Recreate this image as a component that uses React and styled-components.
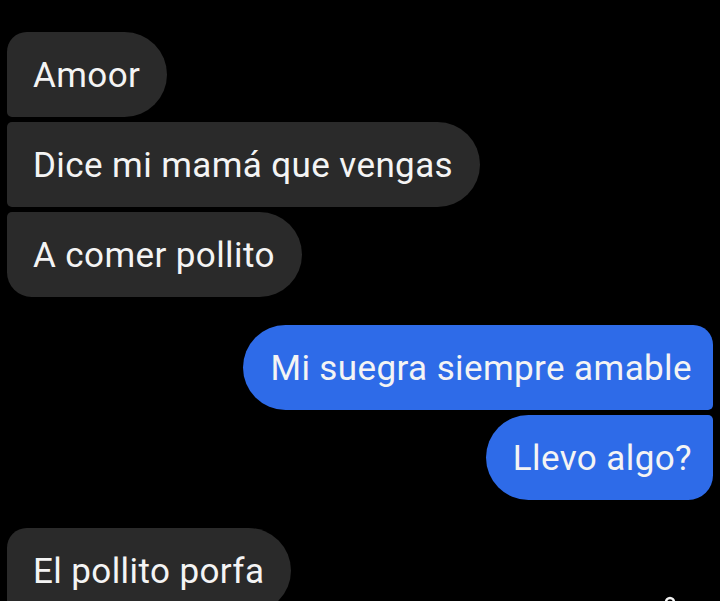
import React from 'react';
import styled, { createGlobalStyle } from 'styled-components';

const GlobalStyle = createGlobalStyle`
  html, body {
    margin: 0;
    padding: 0;
    background: #000;
    overflow: hidden;
  }
  body {
    font-family: Roboto, "Noto Sans", Arial, sans-serif;
  }
`;

const Page = styled.div`
  width: 720px;
  height: 601px;
  box-sizing: border-box;
  padding: 32px 7px 0;
  display: flex;
  flex-direction: column;
  gap: 28px;
  background: #000;
  overflow: hidden;
`;

const Group = styled.div`
  display: flex;
  flex-direction: column;
  gap: 5px;
  align-items: ${(p) => (p.$mine ? 'flex-end' : 'flex-start')};
`;

const LastRow = styled.div`
  display: flex;
  justify-content: space-between;
  align-items: flex-end;
`;

const radii = {
  first: ['20px', '5px'],
  middle: ['5px', '5px'],
  last: ['5px', '25px'],
};

const Bubble = styled.div`
  height: 85px;
  box-sizing: border-box;
  display: flex;
  align-items: center;
  padding: ${(p) => (p.$mine ? '2px 21px 0 27px' : '2px 27px 0 26px')};
  font-size: 35px;
  letter-spacing: 0.4px;
  color: #f4f4f4;
  white-space: nowrap;
  background: ${(p) => (p.$mine ? '#2e6be8' : '#2a2a2a')};
  border-radius: ${(p) => {
    const [top, bottom] = radii[p.$pos];
    return p.$mine
      ? `43px ${top} ${bottom} 43px`
      : `${top} 43px 43px ${bottom}`;
  }};
`;

const Seen = styled.svg`
  width: 14px;
  height: 22px;
  margin-right: 36px;
  margin-bottom: -3px;
  flex-shrink: 0;
`;

const theirs = ['Amoor', 'Dice mi mamá que vengas', 'A comer pollito'];
const mine = ['Mi suegra siempre amable', 'Llevo algo?'];

const pos = (i, n) => (i === 0 ? 'first' : i === n - 1 ? 'last' : 'middle');

export default function App() {
  return (
    <>
      <GlobalStyle />
      <Page>
        <Group>
          {theirs.map((t, i) => (
            <Bubble key={t} $pos={pos(i, theirs.length)}>{t}</Bubble>
          ))}
        </Group>
        <Group $mine>
          {mine.map((t, i) => (
            <Bubble key={t} $mine $pos={pos(i, mine.length)}>{t}</Bubble>
          ))}
        </Group>
        <LastRow>
          <Bubble $pos="first">El pollito porfa</Bubble>
          <Seen viewBox="0 0 14 22">
            <path
              d="M3 22 V8 a4 4 0 0 1 8 0 V22"
              fill="none"
              stroke="#f2f2f2"
              strokeWidth="2.4"
            />
          </Seen>
        </LastRow>
      </Page>
    </>
  );
}
